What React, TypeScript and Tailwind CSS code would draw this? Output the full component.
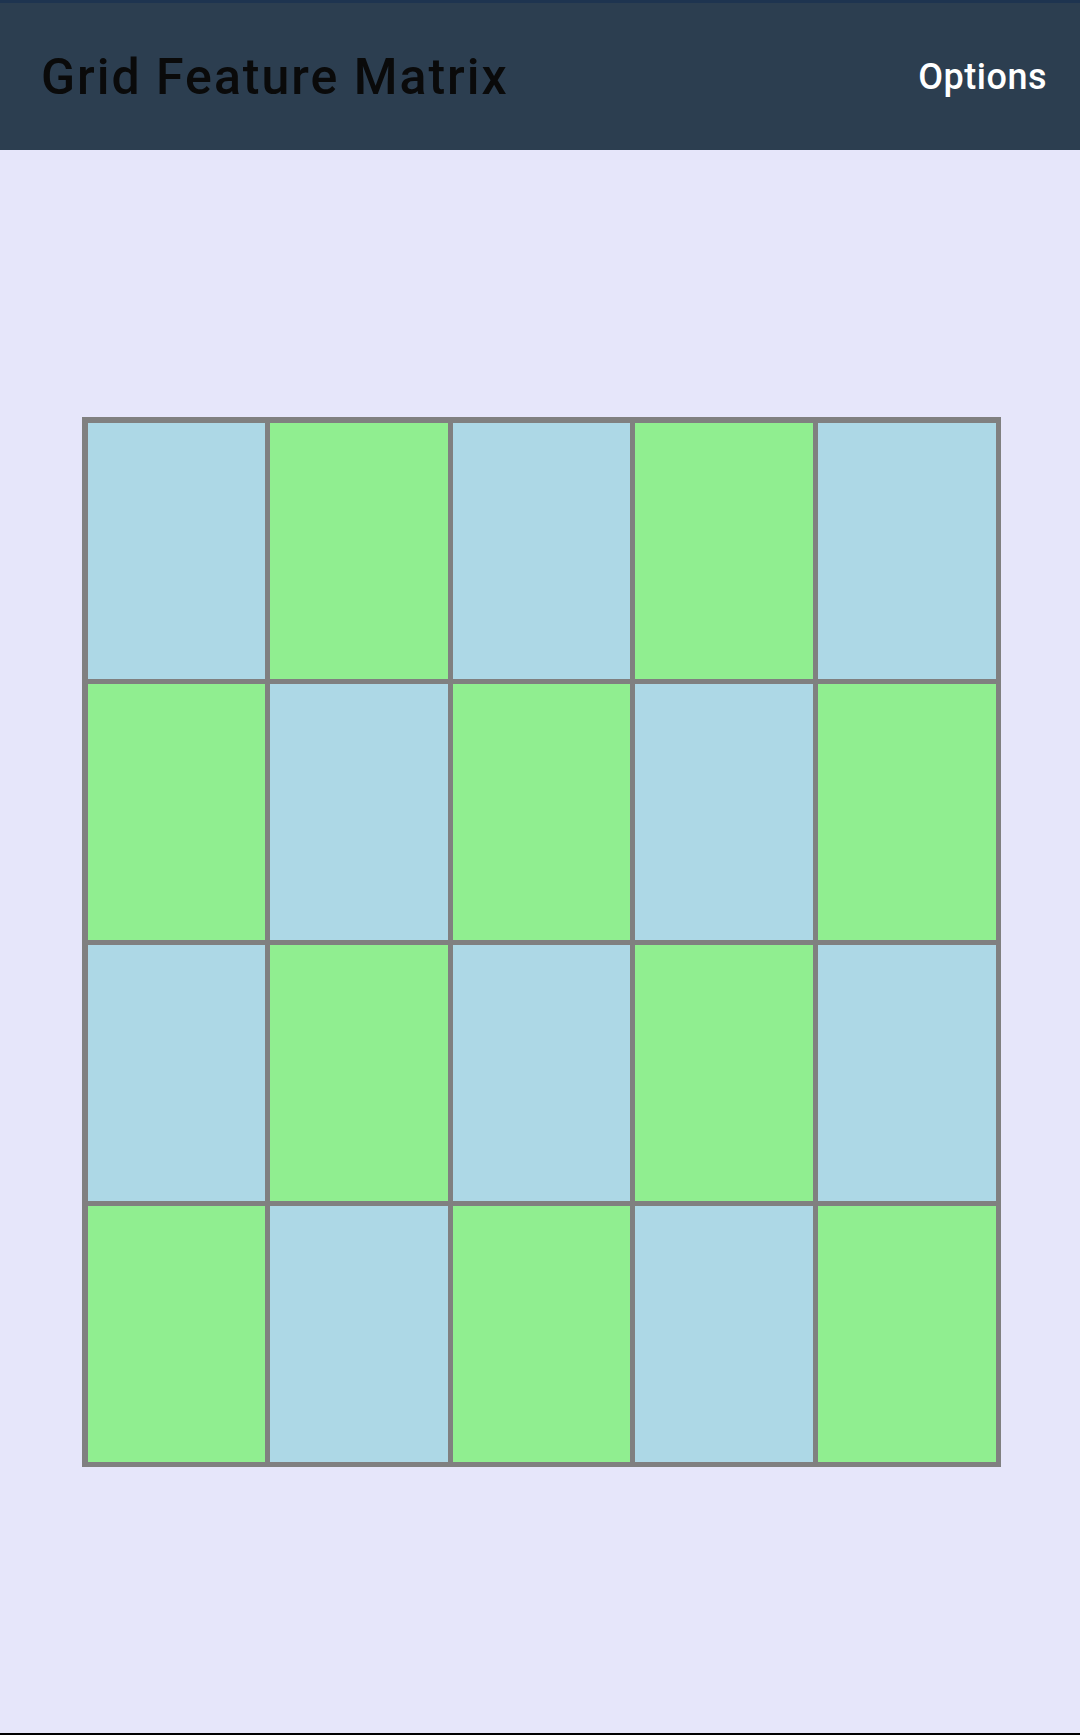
import React from "react";

export default function App() {
  const rows = 4;
  const cols = 5;
  const cells: number[] = [];
  for (let r = 0; r < rows; r++) for (let c = 0; c < cols; c++) cells.push((r + c) % 2);
  return (
    <div
      className="w-[1080px] h-[1735px] flex flex-col bg-[#e6e6fa] border-b-2 border-black"
      style={{ fontFamily: "Roboto, 'Noto Sans', sans-serif" }}
    >
      <header className="h-[150px] shrink-0 bg-[#2c3e50] border-t-[3px] border-[#1e3450] flex items-center justify-between pl-[41px] pr-[33px]">
        <h1 className="text-[50px] font-medium text-[#0a0a0a] leading-none tracking-[2px]">Grid Feature Matrix</h1>
        <button className="text-[36px] font-medium text-white leading-none tracking-[0.5px]">Options</button>
      </header>
      <main className="flex-1 flex items-center justify-center">
        <div className="w-[919px] bg-[#808080] pt-[6px] pl-[6px] pr-[5px] pb-[5px] grid grid-cols-5 gap-[5px] translate-x-[1px]">
          {cells.map((v, i) => (
            <div key={i} className={"h-[256px] " + (v === 0 ? "bg-[#add8e6]" : "bg-[#90ee90]")} />
          ))}
        </div>
      </main>
    </div>
  );
}
